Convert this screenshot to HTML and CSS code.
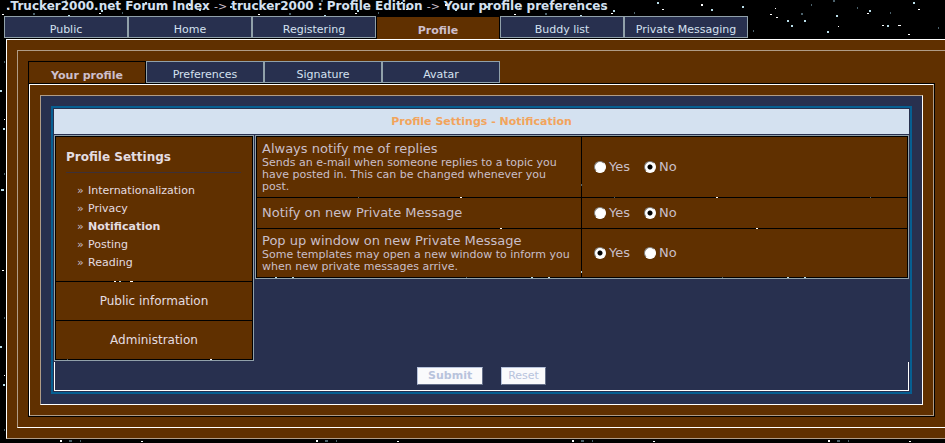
FILE: index.html
```
<!DOCTYPE html>
<html lang="en">
<head>
  <meta charset="UTF-8">
  <meta name="viewport" content="width=device-width, initial-scale=1.0">
  <title>Your profile preferences</title>
  <link rel="stylesheet" href="styles.css">
</head>
<body>
  <div class="breadcrumb">
    <a href="#">.Trucker2000.net Forum Index</a>
    <span class="arrow">-&gt;</span><a href="#">trucker2000 : Profile Edition</a>
    <span class="arrow">-&gt;</span><a href="#">Your profile preferences</a>
  </div>

  <nav class="tabs main-tabs">
    <a href="#">Public</a>
    <a href="#">Home</a>
    <a href="#">Registering</a>
    <a href="#" class="active">Profile</a>
    <a href="#">Buddy list</a>
    <a href="#">Private Messaging</a>
  </nav>

  <div class="outer">
    <div class="outer-inner">
      <nav class="tabs sub-tabs">
        <a href="#" class="active">Your profile</a>
        <a href="#">Preferences</a>
        <a href="#">Signature</a>
        <a href="#">Avatar</a>
      </nav>

      <div class="panel">
        <div class="panel-border">
          <div class="panel-inner">
            <form class="settings">
              <h1>Profile Settings - Notification</h1>

              <div class="columns">
                <div class="menu">
                  <div class="menu-open">
                    <h2>Profile Settings</h2>
                    <ul>
                      <li><a href="#">Internationalization</a></li>
                      <li><a href="#">Privacy</a></li>
                      <li><a href="#" class="current">Notification</a></li>
                      <li><a href="#">Posting</a></li>
                      <li><a href="#">Reading</a></li>
                    </ul>
                  </div>
                  <a href="#" class="menu-item">Public information</a>
                  <a href="#" class="menu-item">Administration</a>
                </div>

                <div class="options">
                  <table>
                    <tr>
                      <td class="label">
                        Always notify me of replies
                        <p>Sends an e-mail when someone replies to a topic you have posted in. This can be changed whenever you post.</p>
                      </td>
                      <td>
                        <div class="choice">
                          <label><input type="radio" name="reply">Yes</label>
                          <label><input type="radio" name="reply" checked>No</label>
                        </div>
                      </td>
                    </tr>
                    <tr>
                      <td class="label">Notify on new Private Message</td>
                      <td>
                        <div class="choice">
                          <label><input type="radio" name="notifypm">Yes</label>
                          <label><input type="radio" name="notifypm" checked>No</label>
                        </div>
                      </td>
                    </tr>
                    <tr>
                      <td class="label">
                        Pop up window on new Private Message
                        <p>Some templates may open a new window to inform you when new private messages arrive.</p>
                      </td>
                      <td>
                        <div class="choice">
                          <label><input type="radio" name="popup" checked>Yes</label>
                          <label><input type="radio" name="popup">No</label>
                        </div>
                      </td>
                    </tr>
                  </table>
                </div>
              </div>

              <div class="buttons">
                <button type="submit" class="submit">Submit</button>
                <button type="reset">Reset</button>
              </div>
            </form>
          </div>
        </div>
      </div>
    </div>
  </div>
</body>
</html>
```
FILE: styles.css
```
:root {
  --brown: #603000;
  --navy: #28304f;
  --grey: #91a1aa;
  --tan: #b09c86;
  --pale: #d4e1f0;
  /* 256px star tile */
  --stars: url("data:image/svg+xml,%3Csvg xmlns='http://www.w3.org/2000/svg' width='256' height='256' shape-rendering='crispEdges'%3E%3Cpath fill='none' stroke='%23b8dce8' stroke-width='2' d='M145 3h2M199 10h2M230 7h2M19 21h2M23 26h2M68 16h2M59 32h2M119 26h2M1 190h3M0 91h2M3 129h2M36 21h2M101 11h2'/%3E%3Cpath fill='none' stroke='%23fff' stroke-width='1' d='M150 9h2M189 4h2M189 5h2M232 16h2M8 17h2M70 26h1M99 13h2M140 34h2M60 184h2M60 185h2M141 185h2M204 197h2M244 228h2M114 25h2M130 25h3M210 103h2M4 119h1M7 8h1M2 14h2M122 13h1'/%3E%3Cpath fill='none' stroke='%234c626c' stroke-width='2' d='M33 14h2M65 1h2M89 8h1M122 13h1M241 31h1M4 62h1M4 174h1M69 185h3M80 185h1M67 103h1M170 28h1M210 22h1M43 5h1M222 33h1M102 197h1'/%3E%3C/svg%3E");
}

body {
  margin: 0;
  padding-bottom: 4px;
  overflow-x: hidden;
  background: #000 var(--stars) fixed;
  font-family: Verdana, "DejaVu Sans", sans-serif;
  font-size: 11px;
  color: #c9bfc9;
}

a {
  color: var(--pale);
  text-decoration: none;
}

.breadcrumb {
  height: 16px;
  padding-left: 6px;
  font-size: 12px;
  line-height: 13px;
  font-weight: bold;
  white-space: nowrap;
}

.breadcrumb .arrow {
  margin-right: 4px;
  font-size: 11px;
  font-weight: normal;
  color: #c9bfc9;
}

.tabs {
  display: flex;
}

.tabs a {
  box-sizing: border-box;
  height: 22px;
  border: 1px solid var(--grey);
  background: var(--navy);
  line-height: 26px;
  text-align: center;
  white-space: nowrap;
}

.tabs a.active {
  border: 1px solid #000;
  border-bottom: 0;
  background: var(--brown);
  font-weight: bold;
  line-height: 28px;
  color: #cdbfcc;
}

.main-tabs {
  height: 23px;
  padding-left: 4px;
}

.main-tabs a {
  width: 124px;
}

.main-tabs a.active {
  height: 23px;
}

.sub-tabs a {
  width: 118px;
}

.outer {
  margin: 0 -12px 0 6px;
  padding: 10px;
  border: 1px solid #fff;
  border-bottom-color: var(--tan);
  background: var(--brown);
}

.outer-inner {
  padding: 10px;
  border: 1px solid var(--tan);
  border-bottom-color: #fff;
}

.panel {
  border: 1px solid #000;
}

.panel-border {
  padding: 10px;
  border: 1px solid #fff;
  border-right-color: var(--tan);
  border-bottom-color: var(--tan);
}

.panel-inner {
  padding: 10px;
  border: 1px solid #fff;
  border-top-color: var(--tan);
  border-left-color: var(--tan);
  background: var(--navy);
}

.settings {
  padding: 1px;
  border: 2px solid #065f92;
}

h1 {
  margin: 0 0 1px;
  background: var(--pale);
  font-size: 11px;
  line-height: 25px;
  text-align: center;
  color: #f2a45c;
}

.columns {
  display: flex;
  align-items: flex-start;
  gap: 1px;
}

.menu {
  display: flex;
  flex-direction: column;
  gap: 1px;
  box-sizing: border-box;
  width: 200px;
  padding: 1px;
  border: 1px solid var(--grey);
  background: #000 var(--stars) fixed;
}

.menu-open {
  padding: 12px 11px 9px 10px;
  background: var(--brown);
}

h2 {
  margin: 0 0 9px;
  padding-bottom: 7px;
  border-bottom: 1px solid #3c3038;
  font-size: 12px;
  line-height: 16px;
  color: #e4dde0;
}

.menu ul {
  margin: 0;
  padding: 0 0 0 11px;
  list-style: none;
}

.menu li {
  line-height: 18px;
}

.menu li::before {
  content: "»";
  display: inline-block;
  width: 11px;
}

.menu a {
  color: #e4dde0;
}

.menu .current {
  font-weight: bold;
}

.menu-item {
  background: var(--brown);
  font-size: 12px;
  line-height: 38px;
  text-align: center;
}

.options {
  flex: 1;
}

.options table {
  width: 100%;
  border: 1px solid var(--grey);
  border-spacing: 1px;
  background: #000 var(--stars) fixed;
  font-size: 13px;
  line-height: 16px;
}

.options td {
  box-sizing: border-box;
  height: 30px;
  padding: 4px 12px;
  background: var(--brown);
}

.options .label {
  width: 324px;
  padding: 4px 5px;
}

.options p {
  margin: 0;
  font-size: 11px;
  line-height: 12px;
}

.choice {
  display: flex;
  gap: 14px;
}

.choice label {
  display: flex;
  align-items: center;
  gap: 3px;
}

.choice input {
  appearance: none;
  box-sizing: border-box;
  width: 12px;
  height: 12px;
  margin: 0;
  border: 1px solid;
  border-color: #808080 #fff #fff #808080;
  border-radius: 50%;
  background: #fff;
}

.choice input:checked {
  background: radial-gradient(circle, #000 2px, #fff 3px);
}

.buttons {
  display: flex;
  justify-content: center;
  gap: 18px;
  margin-top: 1px;
  padding: 5px 0;
  border: 1px solid #fff;
  border-top: 0;
}

.buttons button {
  box-sizing: border-box;
  height: 18px;
  padding: 0 6px;
  border: 1px solid;
  border-color: #b8c3dc #66708a #66708a #b8c3dc;
  background: #fafafc;
  font: 11px/16px Verdana, "DejaVu Sans", sans-serif;
  color: #b8c3dc;
}

.buttons .submit {
  padding: 0 10px;
  font-weight: bold;
}
```
